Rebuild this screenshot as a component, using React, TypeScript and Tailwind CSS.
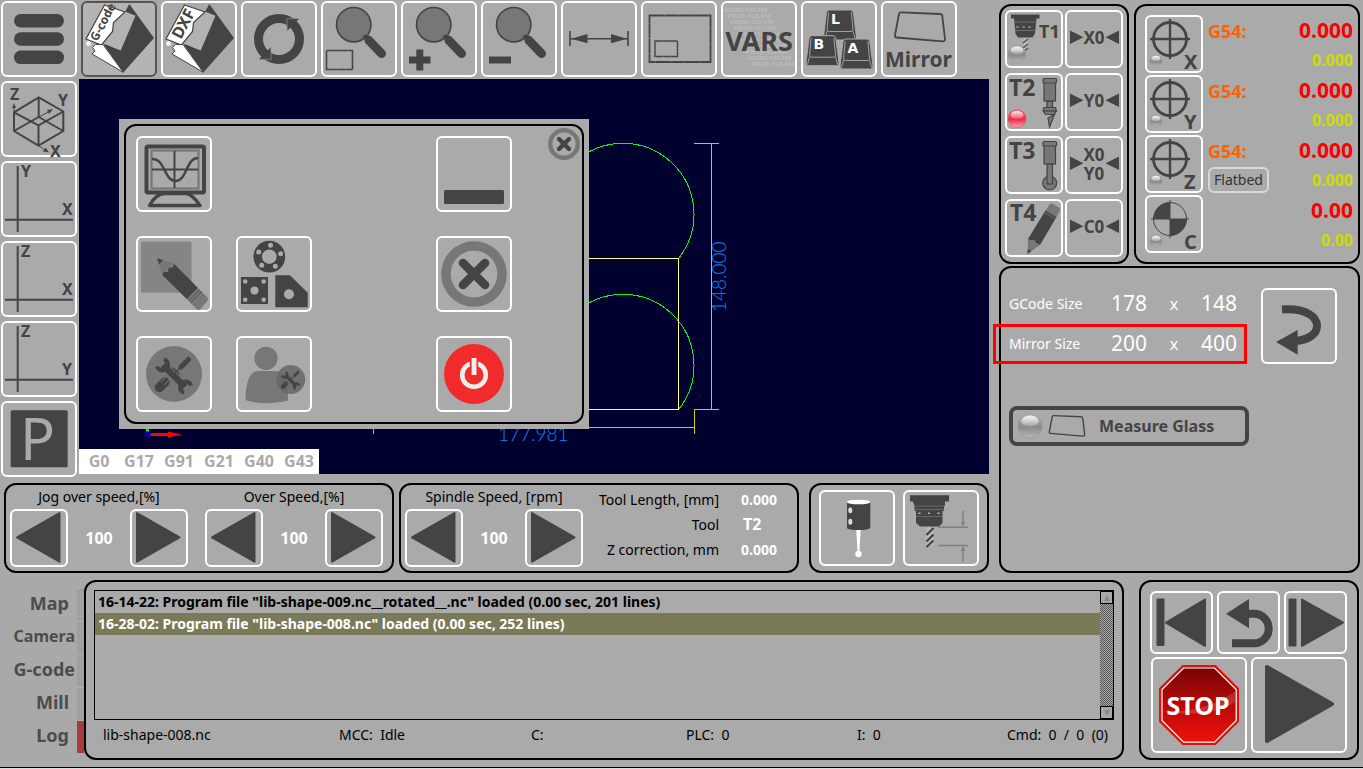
import type { ReactNode } from "react";
import clsx from "clsx";

const DARK = "#444";
const MID = "#777";

type IconButtonProps = {
  label: string;
  size?: "sm" | "md" | "lg" | "xl";
  active?: boolean;
  className?: string;
  children?: ReactNode;
};

const SIZES = {
  sm: { box: 58, cls: "size-[58px]" },
  md: { box: 63, cls: "size-[63px]" },
  lg: { box: 76, cls: "size-[76px]" },
  xl: { box: 96, cls: "size-[96px]" },
};

// The drawing uses the button's own box as its coordinates, border included.
function IconButton({ label, size = "lg", active, className, children }: IconButtonProps) {
  const { box, cls } = SIZES[size];
  return (
    <button
      type="button"
      aria-label={label}
      className={clsx(
        "shrink-0 rounded-md border-2",
        cls,
        active ? "border-[#555] bg-[#b4b4b4]" : "border-white bg-[#aaa]",
        className
      )}
    >
      <svg
        viewBox={`2 2 ${box - 4} ${box - 4}`}
        className="block size-full overflow-visible font-bold"
        fill={DARK}
      >
        {children}
      </svg>
    </button>
  );
}

function Panel({ className, children }: { className?: string; children?: ReactNode }) {
  return <div className={clsx("rounded-xl border-2 border-black bg-[#aaa]", className)}>{children}</div>;
}

/* ---------- icon parts ---------- */

function Folder({ text, size, x, y }: { text: string; size: number; x: number; y: number }) {
  return (
    <g>
      <path d="M48.3 3 73 37 42.3 71.5 23 44 44 11Z" />
      <path d="M43 10 54.5 14.7 39.7 49.5 21 42 32 30 33 21Z" fill="#b2b2b0" />
      <path d="M23.5 4 44 11 32.5 21.5 31.5 30.5 20.5 44 5 38Z" fill="#fff" stroke={DARK} strokeWidth="1.2" />
      <path d="M42.3 71.3 11 53 14 50 11.5 46.5 14.5 43.5 22 43.5Z" fill="#fff" stroke={DARK} strokeWidth="1" />
      <path d="M5 41l4-1 1 4-4 1z" fill="#fff" />
      <text x={x} y={y} fontSize={size} transform={`rotate(-62 ${x} ${y})`}>
        {text}
      </text>
    </g>
  );
}

function Magnifier() {
  return (
    <g>
      <circle cx="32.7" cy="23.7" r="17.2" fill={MID} stroke={DARK} strokeWidth="1.6" />
      <path d="M43 34.5 47 39" stroke={DARK} strokeWidth="4" />
      <path d="M48 39.5 60.5 52.5" stroke={DARK} strokeWidth="9" strokeLinecap="round" />
      <path d="M44 38.5 48 34.5" stroke={DARK} strokeWidth="2" />
    </g>
  );
}

function KeyCap({ x, y, letter }: { x: number; y: number; letter: string }) {
  return (
    <g transform={`translate(${x} ${y})`}>
      <path
        d="M5.5 0H27Q29.5 0 29.8 2.5L33 27Q33.3 30 30.5 30H2.5Q-.3 30 0 27L3 2.5Q3.2 0 5.5 0Z"
        stroke="#aaa"
        strokeWidth="1"
      />
      <path
        d="M5.2 2 3.6 19Q3.5 21.5 6 21.5H27.5Q29.7 21.5 29.5 19L27.8 2M3.6 21 1.6 28.5M29.5 21 31.6 28.5"
        stroke="#aaa"
        strokeWidth="0.9"
        fill="none"
      />
      <text x="7.5" y="13.5" fontSize="14" fill="#fff" className="font-['DejaVu_Sans']">
        {letter}
      </text>
    </g>
  );
}

function Led({ cx, cy, r, red }: { cx: number; cy: number; r: number; red?: boolean }) {
  return (
    <g>
      <circle
        cx={cx}
        cy={cy}
        r={r}
        fill={red ? "url(#led-red)" : "url(#led-grey)"}
        stroke={red ? "#e8405a" : "#8c8c8c"}
        strokeWidth="0.5"
      />
      <ellipse cx={cx} cy={cy - r * 0.42} rx={r * 0.72} ry={r * 0.45} fill="url(#led-shine)" />
    </g>
  );
}

function Gradients() {
  return (
    <svg className="absolute size-0" aria-hidden="true">
      <defs>
        <linearGradient id="led-grey" x1="0" y1="0" x2="0" y2="1">
          <stop offset="0" stopColor="#bbb" />
          <stop offset="0.55" stopColor="#8a8a8a" />
          <stop offset="1" stopColor="#b8b8b8" />
        </linearGradient>
        <linearGradient id="led-red" x1="0" y1="0" x2="0" y2="1">
          <stop offset="0" stopColor="#f3566a" />
          <stop offset="0.55" stopColor="#ee3048" />
          <stop offset="1" stopColor="#ffa0ac" />
        </linearGradient>
        <linearGradient id="led-shine" x1="0" y1="0" x2="0" y2="1">
          <stop offset="0" stopColor="#fff" stopOpacity="0.85" />
          <stop offset="1" stopColor="#fff" stopOpacity="0.15" />
        </linearGradient>
        <linearGradient id="stop-red" x1="0" y1="0" x2="0" y2="1">
          <stop offset="0" stopColor="#780404" />
          <stop offset="0.5" stopColor="#b80a08" />
          <stop offset="1" stopColor="#f01008" />
        </linearGradient>
      </defs>
    </svg>
  );
}

function Tools() {
  return (
    <g>
      <path d="M27 29 49 51" stroke={DARK} strokeWidth="6.5" />
      <path d="M21 30.5A5.5 5.5 0 0 0 30 33 5.5 5.5 0 0 0 28 23.5" fill="none" stroke={DARK} strokeWidth="4" />
      <path d="M55 49.5A5.5 5.5 0 0 0 46 47 5.5 5.5 0 0 0 48 56.5" fill="none" stroke={DARK} strokeWidth="4" />
      <path d="M52.5 23.5 45 31" stroke={DARK} strokeWidth="5" strokeLinecap="round" />
      <path d="M46 30 38 38M36.5 31.5 43.5 38.5" stroke={DARK} strokeWidth="1.5" />
      <path d="M23.5 51.5 29 46" stroke={DARK} strokeWidth="9.5" strokeLinecap="round" />
      <path d="M25 46 30 41M28 49 33 44M31 52 36 47" stroke={MID} strokeWidth="1" />
    </g>
  );
}

function AxisPlane({ v, h }: { v: string; h: string }) {
  return (
    <g fontSize="16">
      <path d="M16.7 5V71M4 58.7H72" stroke={DARK} strokeWidth="2" />
      <text x="20" y="16">{v}</text>
      <text x="61" y="54">{h}</text>
    </g>
  );
}

function ZeroMark({ lines }: { lines: string[] }) {
  return (
    <g fontSize="17" textAnchor="middle">
      <path d="M5 20.5V34L18.5 27.3ZM54 20.5V34L40.5 27.3Z" />
      {lines.map((line, i) => (
        <text key={line} x="29" y={lines.length === 1 ? 33.5 : 24.5 + i * 19}>
          {line}
        </text>
      ))}
    </g>
  );
}

function ArrowLeft() {
  return <path d="M7 28.3 49.5 4V52.7Z" stroke={DARK} strokeWidth="2" strokeLinejoin="round" />;
}

function ArrowRight() {
  return <path d="M49.5 28.3 7 4V52.7Z" stroke={DARK} strokeWidth="2" strokeLinejoin="round" />;
}

function Cross({ c, d, w }: { c: number; d: number; w: number }) {
  return (
    <path
      d={`M${c - d} ${c - d} ${c + d} ${c + d}M${c + d} ${c - d} ${c - d} ${c + d}`}
      stroke={DARK}
      strokeWidth={w}
      strokeLinecap="round"
    />
  );
}

const MIRROR = "M20 11.3 59 13Q61 13 61.3 15L64 38Q64 40.5 61.5 40.3L15.5 36.5Q13.5 36.3 14 34L18 13Q18.4 11.2 20 11.3Z";

/* ---------- page sections ---------- */

function Toolbar() {
  return (
    <header className="flex h-[79px] gap-1 p-px">
      <IconButton label="Menu">
        <rect x="13" y="13" width="50" height="13.5" rx="6.7" />
        <rect x="13" y="31.3" width="50" height="13.5" rx="6.7" />
        <rect x="13" y="49.6" width="50" height="13.5" rx="6.7" />
      </IconButton>
      <IconButton label="Open G-code" active>
        <Folder text="G-code" size={12} x={16} y={41} />
      </IconButton>
      <IconButton label="Open DXF">
        <Folder text="DXF" size={16} x={20} y={39} />
      </IconButton>
      <IconButton label="Reload">
        <circle cx="38" cy="38" r="20.5" fill="none" stroke={DARK} strokeWidth="9" />
        <path d="M45.7 17.7H58L46.3 29.7Z" />
        <path d="M30.3 58.3H18L29.7 46.3Z" />
        <path d="M46.3 29.7 45.7 17.7H54M29.7 46.3 30.3 58.3H22" fill="none" stroke="#888" strokeWidth="0.8" />
      </IconButton>
      <IconButton label="Zoom to area">
        <Magnifier />
        <rect x="5.5" y="49.5" width="26" height="19" fill="none" stroke={DARK} strokeWidth="1.6" strokeDasharray="7.2 0.3" />
      </IconButton>
      <IconButton label="Zoom in">
        <Magnifier />
        <path d="M8 59H29.5M18.8 48.5V69.5" stroke={DARK} strokeWidth="7" />
      </IconButton>
      <IconButton label="Zoom out">
        <Magnifier />
        <rect x="8" y="55.5" width="22" height="7" />
      </IconButton>
      <IconButton label="Measure">
        <path d="M9 30V45M67 30V45M9 37.7H67" stroke={DARK} strokeWidth="1.6" />
        <path d="M10 37.7 26.5 33V42.3ZM66 37.7 50 33V42.3Z" />
      </IconButton>
      <IconButton label="Fit to table">
        <rect x="8.5" y="14.5" width="61" height="46.5" fill="none" stroke={DARK} strokeWidth="1.8" strokeDasharray="14.5 0.3" />
        <rect x="14" y="40" width="22.5" height="15.5" fill="none" stroke={DARK} strokeWidth="1.4" strokeDasharray="7.2 0.3" />
      </IconButton>
      <IconButton label="Variables">
        <g fontSize="6" fill="#bcbcbc">
          {[0, 1, 2, 3, 4, 5, 6, 7, 8, 9].map((i) => (
            <text key={i} x={3 + i * 3} y={11 + i * 6}>
              #5029=123,456
            </text>
          ))}
        </g>
        <text x="38" y="50" fontSize="27" textAnchor="middle">VARS</text>
      </IconButton>
      <IconButton label="Keyboard">
        <KeyCap x={22.5} y={9} letter="L" />
        <KeyCap x={5} y={34.7} letter="B" />
        <KeyCap x={39} y={38} letter="A" />
      </IconButton>
      <IconButton label="Mirror">
        <path d={MIRROR} fill="none" stroke={DARK} strokeWidth="1.8" />
        <text x="37.5" y="65.5" fontSize="21" textAnchor="middle">Mirror</text>
      </IconButton>
    </header>
  );
}

function ViewButtons() {
  return (
    <div className="flex w-[79px] shrink-0 flex-col gap-1 px-px pt-0.5">
      <IconButton label="Isometric view">
        <path
          d="M37.7 16.3 62.3 30.5V50L37.5 64.5 13 50V31.3ZM37.7 16.3V36M37.7 36 13 50M37.7 36 62.3 50M37.5 44.3 13 31.3M37.5 44.3 62.3 30.5M37.5 44.3V64.5"
          fill="none"
          stroke={DARK}
          strokeWidth="2"
        />
        <path d="M13 31V25M38 36 49 30M37.5 64.5 44 69" stroke={DARK} strokeWidth="1" />
        <path d="M13 22 15 27H11ZM52 28 46 29 48 33ZM48 71.5 42 70.5 44.5 66.5Z" />
        <g fontSize="16">
          <text x="9" y="19">Z</text>
          <text x="57" y="24.5">Y</text>
          <text x="49" y="75.5">X</text>
        </g>
      </IconButton>
      <IconButton label="XY view"><AxisPlane v="Y" h="X" /></IconButton>
      <IconButton label="XZ view"><AxisPlane v="Z" h="X" /></IconButton>
      <IconButton label="YZ view"><AxisPlane v="Z" h="Y" /></IconButton>
      <IconButton label="Parking">
        <rect x="9.7" y="9.3" width="57" height="57" rx="1.5" />
        <text x="19" y="58.5" fontSize="58" fill="#aaa" className="font-normal">P</text>
      </IconButton>
    </div>
  );
}

function ToolPath() {
  return (
    <svg className="block h-[395px] w-[910px]" viewBox="79 79 910 395" fill="none">
      <g shapeRendering="crispEdges">
        <path d="M567 258A71 71 0 1 1 679 258M567 409A71 71 0 1 1 679 409" stroke="#0f0" />
        <path d="M567 258.5H678.5V409.5H567" stroke="#ffff80" />
        <path d="M694 143.5H719M694 409.5H719M711.5 143V409M373 427.5H694M694.5 409V434M373.5 427V434" stroke="#cc0" />
      </g>
      <g fill="#0a84ff" fontSize="19" className="font-['Lato'] font-light">
        <text x="498" y="441">177.981</text>
        <text x="726" y="312" transform="rotate(-90 726 312)">148.000</text>
      </g>
      <path d="M147.5 420V432" stroke="#0f0" strokeWidth="3" />
      <path d="M148 434.5H170" stroke="red" strokeWidth="3" />
      <path d="M168 431.5 182 434.5 168 437.5Z" fill="red" />
      <circle cx="147.5" cy="434.5" r="3.2" fill="#0000b0" />
    </svg>
  );
}

function MenuDialog() {
  return (
    <div role="dialog" aria-label="Main menu" className="absolute top-10 left-10 bg-[#aaa] p-[5px]">
      <Panel className="relative h-[300px] w-[460px] p-2.5">
        <div className="grid grid-cols-[repeat(4,76px)] gap-6">
          <IconButton label="Oscilloscope">
            <rect x="10.5" y="10.5" width="57.5" height="46" rx="1.5" fill="none" stroke={DARK} strokeWidth="4" />
            <rect x="15.5" y="14.5" width="47" height="38" fill="none" stroke={MID} strokeWidth="2.2" />
            <path d="M38.5 15V52M16 33.5H62" stroke={DARK} strokeWidth="2" />
            <path d="M16 23C29 22 28 45 39.5 45S50 22 62 22" fill="none" stroke={DARK} strokeWidth="2.5" />
            <path d="M13.5 69.5H64C59 62 55 58 50 57.5H28C22 58 17 63 13.5 69.5Z" fill="none" stroke={DARK} strokeWidth="3.4" strokeLinejoin="round" />
          </IconButton>
          <IconButton label="Minimize" className="col-start-4">
            <rect x="8" y="54" width="60" height="14" rx="1.5" />
          </IconButton>
          <IconButton label="Edit program" className="col-start-1">
            <rect x="5" y="5.7" width="50.5" height="51" fill="#858585" />
            <path d="M21.3 22.3 38 27.7 26.3 39Z" fill={MID} />
            <path d="M21.3 22.3 27 24 23 28.5Z" />
            <path d="M38 27.7 62 52 51 63.3 26.3 39 28 36 32 36 32.5 32 37 31Z" />
            <path d="M62 52 71 61Q73 63 71 65.5L65 72.5Q62.5 75 60.5 73L51 63.3Z" fill={MID} />
            <path d="M63.5 53.5 52.5 64.8M65.5 55.5 54.5 66.8" stroke={DARK} strokeWidth="0.8" />
          </IconButton>
          <IconButton label="Shape library">
            <circle cx="33.3" cy="20.7" r="11.6" fill="none" stroke={DARK} strokeWidth="8.6" />
            <g fill="#aaa">
              <circle cx="34.5" cy="9.2" r="2.5" />
              <circle cx="44.7" cy="17.8" r="2.5" />
              <circle cx="39.3" cy="30.3" r="2.5" />
              <circle cx="25.7" cy="29.3" r="2.5" />
              <circle cx="22.7" cy="16" r="2.5" />
            </g>
            <rect x="5" y="41" width="27" height="27" />
            <g fill="#aaa">
              <circle cx="9.2" cy="45.5" r="2.3" />
              <circle cx="27.7" cy="45.5" r="2.3" />
              <circle cx="9.2" cy="63.7" r="2.3" />
              <circle cx="27.7" cy="63.7" r="2.3" />
              <circle cx="18.5" cy="54.5" r="4" />
            </g>
            <path d="M39.3 39.3H54L71.7 56.7V71.3H39.3Z" />
            <circle cx="53" cy="58.3" r="5" fill="#aaa" />
          </IconButton>
          <IconButton label="Cancel" className="col-start-4">
            <circle cx="38" cy="38" r="28" fill="none" stroke={MID} strokeWidth="9.5" />
            <Cross c={38} d={11} w={8.5} />
          </IconButton>
          <IconButton label="Settings" className="col-start-1">
            <circle cx="38" cy="38" r="28" fill={MID} />
            <Tools />
          </IconButton>
          <IconButton label="User settings">
            <circle cx="30" cy="22.3" r="11.6" fill={MID} />
            <path d="M9.5 64C9.5 48 13 35.5 22 35H40C49 36 52 45 52 64.5 36 68 22 68.5 9.5 64Z" fill={MID} />
            <circle cx="54.7" cy="43.5" r="14.5" fill="#666" opacity="0.85" />
            <g transform="translate(35.1 23.9) scale(0.516)">
              <Tools />
            </g>
          </IconButton>
          <IconButton label="Power off" className="col-start-4">
            <circle cx="38" cy="38" r="30" fill="#f12b2b" />
            <circle cx="38" cy="39" r="11.8" fill="none" stroke="#eee" strokeWidth="4.6" />
            <rect x="33.8" y="21" width="8.4" height="19" fill="#f12b2b" />
            <rect x="35.6" y="22" width="4.9" height="17" fill="#eee" />
          </IconButton>
        </div>
        <button type="button" aria-label="Close" className="absolute top-0.5 right-0.5 size-8">
          <svg viewBox="0 0 32 32">
            <circle cx="16" cy="16" r="13.8" fill="none" stroke={MID} strokeWidth="4.4" />
            <Cross c={16} d={5} w={4.4} />
          </svg>
        </button>
      </Panel>
    </div>
  );
}

function ModalCodes() {
  return (
    <div className="absolute bottom-0 left-0 grid h-[25px] w-60 grid-cols-6 bg-white text-center text-base leading-6 font-bold text-[#aaa]">
      {["G0", "G17", "G91", "G21", "G40", "G43"].map((code) => (
        <span key={code}>{code}</span>
      ))}
    </div>
  );
}

function Override({ label, name }: { label: string; name: string }) {
  return (
    <div className="w-[178px] shrink-0">
      <div className="h-6 text-center text-sm leading-6 whitespace-nowrap">{label}</div>
      <div className="flex items-center justify-between text-base font-bold text-white">
        <IconButton size="sm" label={`Decrease ${name}`}><ArrowLeft /></IconButton>
        <output aria-label={name}>100</output>
        <IconButton size="sm" label={`Increase ${name}`}><ArrowRight /></IconButton>
      </div>
    </div>
  );
}

function SpeedPanels() {
  return (
    <div className="grid h-[99px] grid-cols-[395fr_410fr_180fr] pt-[9px] pl-1">
      <Panel className="mr-[5px] flex gap-[17px] pl-1">
        <Override label="Jog over speed,[%]" name="jog speed" />
        <Override label="Over Speed,[%]" name="feed speed" />
      </Panel>
      <Panel className="mr-2.5 flex pl-1">
        <Override label="Spindle Speed, [rpm]" name="spindle speed" />
        <dl className="grid h-[78px] flex-1 grid-cols-[1fr_auto] content-start gap-x-[22px] pt-0.5 pr-5 text-sm leading-[25px]">
          <dt className="text-right">Tool Length, [mm]</dt>
          <dd className="font-bold text-white">0.000</dd>
          <dt className="text-right">Tool</dt>
          <dd className="px-0.5 text-base leading-[25px] font-bold text-white">T2</dd>
          <dt className="text-right">Z correction, mm</dt>
          <dd className="font-bold text-white">0.000</dd>
        </dl>
      </Panel>
      <Panel className="flex gap-2 pt-[5px] pl-2">
        <IconButton label="Probe">
          <rect x="28" y="12" width="23.3" height="26" />
          <ellipse cx="39.6" cy="38" rx="11.6" ry="2.2" />
          <ellipse cx="39.6" cy="12" rx="11.8" ry="2.3" fill="#fff" />
          <ellipse cx="31.3" cy="20.3" rx="2" ry="3" fill="#ddd" />
          <ellipse cx="31.3" cy="31.7" rx="2" ry="3" fill="#ddd" />
          <path d="M37.3 40H41.7L40.3 63H38.5Z" fill="#fff" />
          <circle cx="39.5" cy="64" r="3.2" fill="#fff" />
        </IconButton>
        <IconButton label="Measure tool length">
          <path d="M7 5.3H46V11.5H42V16H41V21H39.5V33L36 36.5H17L13 33V21H11.5V16L10 11.5H7Z" />
          <path d="M11 16H42M11.5 19.5H41M13 26.5H40" stroke="#777" strokeWidth="0.7" />
          <path d="M15.5 23.3h2M25 23.3h2M34.5 23.3h2" stroke="#bbb" strokeWidth="1.6" />
          <path d="M23.5 37.5H30.5V55L23.5 57Z" fill="#bbb" />
          <path d="M23.5 45 30.5 38M23.5 51.5 30.5 44.5M23.5 57 30.5 50.5" stroke={DARK} strokeWidth="2.2" />
          <path d="M35 37.3H65M35 55.5H65M60 21V34M60 72V59" stroke="#808080" strokeWidth="1.5" />
          <path d="M57.7 32H62.3L60 37ZM57.7 61H62.3L60 56Z" fill="#808080" />
        </IconButton>
      </Panel>
    </div>
  );
}

function ToolPanel() {
  return (
    <Panel className="grid w-[130px] shrink-0 grid-cols-[repeat(2,58px)] content-start gap-x-0.5 gap-y-[5px] p-1">
      <IconButton size="sm" label="Tool 1">
        <path d="M6 4.5H34.5V8.5H31.5L30 23.5 27.5 27.5H13L10.5 23.5 9 8.5H6Z" />
        <path d="M9 12H31.5M10 20.5H30.5" stroke={MID} strokeWidth="0.8" />
        <path d="M11 17h3M17 17h3M23 17h3" stroke="#aaa" strokeWidth="1.2" />
        <path d="M18.5 28.5H22.5V39L18.5 42Z" fill="#bbb" />
        <path d="M18 33 23 29M18 38 23 34M18 42 23 38" stroke={DARK} strokeWidth="1.2" />
        <Led cx={12} cy={44} r={8.7} />
        <text x="34" y="28" fontSize="18">T1</text>
      </IconButton>
      <IconButton size="sm" label="Zero X"><ZeroMark lines={["X0"]} /></IconButton>
      <IconButton size="sm" label="Tool 2">
        <text x="4" y="23" fontSize="23">T2</text>
        <Led cx={12} cy={45.7} r={9} red />
        <g fill={MID} stroke={DARK} strokeWidth="1.2">
          <path d="M43 45 49.5 41.5 44.5 54Z" />
          <rect x="42" y="28" width="5.5" height="7" />
          <rect x="39" y="7" width="11.5" height="21" />
          <rect x="38" y="5.5" width="13.5" height="4.5" rx="1" />
          <path d="M39 34.5H50.5L51.5 38 49 41.5H40.5L38 38Z" />
          <path d="M38 38H51.5" />
        </g>
      </IconButton>
      <IconButton size="sm" label="Zero Y"><ZeroMark lines={["Y0"]} /></IconButton>
      <IconButton size="sm" label="Tool 3">
        <text x="4" y="23" fontSize="23">T3</text>
        <g fill={MID} stroke={DARK} strokeWidth="1.2">
          <circle cx="44.7" cy="47" r="7" />
          <rect x="42" y="28" width="5.5" height="20" />
          <rect x="39" y="7" width="11.5" height="21" />
          <rect x="38" y="5.5" width="13.5" height="4.5" rx="1" />
        </g>
      </IconButton>
      <IconButton size="sm" label="Zero X and Y"><ZeroMark lines={["X0", "Y0"]} /></IconButton>
      <IconButton size="sm" label="Tool 4">
        <text x="5" y="22" fontSize="23">T4</text>
        <path d="M45 5Q47 4 49 5.5L54 8.5Q56 10 54.5 12L51.5 18 40.5 11.5Z" fill={MID} />
        <path d="M40.5 11.5 51.5 18 35 46 31 44 29 41 25.5 41.5 23 40Z" />
        <path d="M23 40 25.5 41.5 29 41 31 44 35 46 22.5 55Z" fill={MID} />
        <path d="M22.8 50 26.5 52 22.5 55Z" />
        <path d="M39.5 13.5 50.5 20M41 11 52 17.5" stroke={MID} strokeWidth="0.8" />
      </IconButton>
      <IconButton size="sm" label="Zero C"><ZeroMark lines={["C0"]} /></IconButton>
    </Panel>
  );
}

const AXES = [
  { axis: "X", offset: "G54:", work: "0.000", machine: "0.000" },
  { axis: "Y", offset: "G54:", work: "0.000", machine: "0.000" },
  { axis: "Z", offset: "G54:", work: "0.000", machine: "0.000", mode: "Flatbed" },
  { axis: "C", offset: "", work: "0.00", machine: "0.00" },
];

function PositionPanel() {
  return (
    <Panel className="flex flex-1 flex-col gap-0.5 py-[9px] pr-[5px] pl-[9px]">
      {AXES.map(({ axis, offset, work, machine, mode }) => (
        <div key={axis} className="flex h-[58px] gap-[5px]">
          <IconButton size="sm" label={`Home ${axis}`}>
            {axis === "C" ? (
              <>
                <circle cx="25" cy="24" r="16.5" fill="none" stroke={DARK} strokeWidth="1" />
                <path d="M25 5V43M6 24H44" stroke={DARK} strokeWidth="1" />
                <path d="M25 24V7.5A16.5 16.5 0 0 0 8.5 24ZM25 24V40.5A16.5 16.5 0 0 0 41.5 24Z" />
              </>
            ) : (
              <>
                <circle cx="25" cy="24" r="16.5" fill="none" stroke={DARK} strokeWidth="2.8" />
                <path d="M25 4V44M5 24H45" stroke={DARK} strokeWidth="2.4" />
              </>
            )}
            <Led cx={11} cy={46} r={6} />
            <text x="39" y="54" fontSize="20">{axis}</text>
          </IconButton>
          <div className="flex-1">
            <div className="text-lg leading-8 font-bold text-[#ff6000]">{offset}</div>
            {mode && (
              <button
                type="button"
                className="block h-[26px] rounded-md border-2 border-[#d8d8d8] px-1 text-sm leading-[22px] text-[#333]"
              >
                {mode}
              </button>
            )}
          </div>
          <div className="text-right font-bold">
            <div className="text-[21px] leading-[30px] text-[#f00]">{work}</div>
            <div className="text-base leading-[30px] text-[#cfdc00]">{machine}</div>
          </div>
        </div>
      ))}
    </Panel>
  );
}

function SizeRow({ label, w, h, marked }: { label: string; w: number; h: number; marked?: boolean }) {
  return (
    <div className="relative grid h-10 w-[230px] grid-cols-[1fr_40px_50px_40px] items-center text-center text-white">
      <span className="text-left text-sm whitespace-nowrap">{label}</span>
      <span className="text-[21px]">{w}</span>
      <span className="text-base">x</span>
      <span className="text-[21px]">{h}</span>
      {marked && <span className="absolute inset-y-0 -right-2 -left-4 border-3 border-[#f00]" />}
    </div>
  );
}

function GlassPanel() {
  return (
    <Panel className="h-[307px] pt-4 pr-[21px] pl-2">
      <div className="flex justify-between">
        <div>
          <SizeRow label="GCode Size" w={178} h={148} />
          <SizeRow label="Mirror Size" w={200} h={400} marked />
        </div>
        <IconButton label="Back" className="mt-1">
          <path d="M21 21.5C47 20 56 30 56 38 56 47 46 52 34 53" fill="none" stroke={DARK} strokeWidth="8" />
          <path d="M15 54 36.7 42V66.7Z" />
        </IconButton>
      </div>
      <button
        type="button"
        className="mt-[42px] flex h-10 w-60 items-center rounded-lg border-4 border-[#444] pl-1 text-base font-bold text-[#444]"
      >
        <svg viewBox="0 0 26 26" className="size-[26px]">
          <Led cx={13} cy={13} r={12} />
        </svg>
        <svg viewBox="12 9 54 34" className="ml-1 h-6 w-10" fill="none" stroke={DARK} strokeWidth="2">
          <path d={MIRROR} />
        </svg>
        <span className="ml-3">Measure Glass</span>
      </button>
    </Panel>
  );
}

const TABS = [
  { name: "Map", cls: "text-lg pr-2" },
  { name: "Camera", cls: "text-base pr-0.5" },
  { name: "G-code", cls: "text-lg pr-0.5" },
  { name: "Mill", cls: "text-lg pr-2" },
  { name: "Log", cls: "text-lg pr-2" },
];

function LogTabs() {
  return (
    <nav className="flex w-[84px] shrink-0 flex-col pt-2">
      {TABS.map(({ name, cls }) => (
        <button
          key={name}
          type="button"
          className="flex h-[33px] items-start justify-end font-bold text-[#4c4c4c]"
        >
          <span className={clsx("leading-[31px]", cls)}>{name}</span>
          <span
            className={clsx(
              "h-full w-[7px] border-t border-[#b0b0b0]",
              name === "Log" ? "bg-[#a83c3c]" : "bg-[#a0a0a0]"
            )}
          />
        </button>
      ))}
    </nav>
  );
}

function LogPanel() {
  return (
    <Panel className="flex flex-1 flex-col px-2 pt-2">
      <div className="flex h-[130px] border border-black">
        <ul className="flex-1 text-sm leading-[22px] font-bold">
          <li className="px-[3px]">16-14-22: Program file "lib-shape-009.nc__rotated__.nc" loaded (0.00 sec, 201 lines)</li>
          <li className="bg-[#7a7958] px-[3px] text-white">
            16-28-02: Program file "lib-shape-008.nc" loaded (0.00 sec, 252 lines)
          </li>
        </ul>
        <div className="flex w-[13px] flex-col bg-[repeating-conic-gradient(#555_0_25%,#aaa_0_50%)] bg-size-[2px_2px]">
          <button type="button" aria-label="Scroll up" className="flex size-[13px] items-center justify-center border border-black bg-[#a8a8a8]">
            <svg viewBox="0 0 6 6" className="size-1.5"><path d="M3 0 6 6H0Z" fill="#888" /></svg>
          </button>
          <button type="button" aria-label="Scroll down" className="mt-auto flex size-[13px] items-center justify-center border border-black bg-[#a8a8a8]">
            <svg viewBox="0 0 6 6" className="size-1.5"><path d="M3 6 6 0H0Z" fill="#888" /></svg>
          </button>
        </div>
      </div>
      <div className="grid grid-cols-[236fr_192fr_155fr_171fr_150fr_107fr] pl-[9px] text-sm leading-[30px] whitespace-pre">
        <span>lib-shape-008.nc</span>
        <span>MCC:  Idle</span>
        <span>C:</span>
        <span>PLC:  0</span>
        <span>I:  0</span>
        <span>Cmd:  0  /  0  (0)</span>
      </div>
    </Panel>
  );
}

function RunPanel() {
  return (
    <Panel className="mr-1 ml-[15px] w-[220px] shrink-0 pt-[9px] pl-[9px]">
      <div className="flex gap-1">
        <IconButton size="md" label="To start">
          <rect x="6.5" y="7.5" width="8" height="47.5" rx="1" />
          <path d="M16 31.7 55 8.5V55Z" stroke={DARK} strokeWidth="2" strokeLinejoin="round" />
        </IconButton>
        <IconButton size="md" label="Step back">
          <path d="M9 22.7 32 8V37.3Z" />
          <path d="M31 22.8H37A14.7 14.7 0 0 1 37 52.3H15" fill="none" stroke={DARK} strokeWidth="8" />
        </IconButton>
        <IconButton size="md" label="Step forward">
          <rect x="4.5" y="7.5" width="8" height="48" rx="1" />
          <path d="M59 31.7 18 8.5V55Z" stroke={DARK} strokeWidth="2" strokeLinejoin="round" />
        </IconButton>
      </div>
      <div className="mt-[3px] flex gap-1 pl-px">
        <IconButton size="xl" label="Stop">
          <path d="M31.5 8H64.7L88 31.3V64.7L64.7 88H31.5L8 64.7V31.3Z" fill="#e01208" />
          <path
            d="M32.6 11H63.5L85.2 32.6V63.5L63.5 85.2H32.6L11 63.5V32.6Z"
            fill="url(#stop-red)"
            stroke="#fff"
            strokeWidth="1.2"
          />
          <path d="M12 54C40 56 66 48 84.5 34V45C70 55 40 60 12 54Z" fill="#fff" opacity="0.15" />
          <text x="47" y="57.5" fontSize="25" fill="#fff" textAnchor="middle">STOP</text>
        </IconButton>
        <IconButton size="xl" label="Start">
          <path d="M16 10V84L81 47Z" stroke={DARK} strokeWidth="4" strokeLinejoin="round" />
        </IconButton>
      </div>
    </Panel>
  );
}

export default function App() {
  return (
    <div className="flex min-h-screen flex-col bg-[#a9a9a9] font-['Noto_Sans','Open_Sans',sans-serif] text-black">
      <Gradients />
      <div className="flex">
        <div className="min-w-0 flex-1">
          <Toolbar />
          <main className="flex h-[395px]">
            <ViewButtons />
            <div className="relative min-w-0 flex-1 overflow-hidden bg-[#00002f]">
              <ToolPath />
              <MenuDialog />
              <ModalCodes />
            </div>
          </main>
          <SpeedPanels />
        </div>
        <aside className="flex w-[374px] shrink-0 flex-col gap-0.5 pt-1 pr-[3px] pl-2.5">
          <div className="flex h-[260px] gap-[5px]">
            <ToolPanel />
            <PositionPanel />
          </div>
          <GlassPanel />
        </aside>
      </div>
      <div className="mt-[7px] flex h-[180px]">
        <LogTabs />
        <LogPanel />
        <RunPanel />
      </div>
      <footer className="mt-auto h-0.5 border-t border-black bg-[#ddd]" />
    </div>
  );
}
